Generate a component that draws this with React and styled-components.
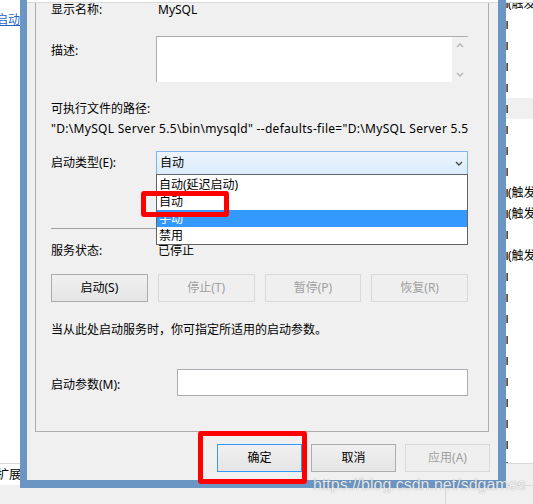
import React from "react";
import styled, { createGlobalStyle } from "styled-components";

const FRAME = "#6b96c3";

const GlobalStyle = createGlobalStyle`
  html, body { margin: 0; padding: 0; }
  body {
    background: #f0f0f0;
    font-family: "Noto Sans", "Noto Sans CJK SC", sans-serif;
    font-size: 12px;
    line-height: 14px;
    color: #000;
  }
  * { box-sizing: border-box; }
`;

const Screen = styled.div`
  position: relative;
  width: 533px;
  height: 504px;
  overflow: hidden;
  display: grid;
  grid-template-columns: 20px 486px 27px;
  grid-template-rows: 488px 16px;
  background: #f0f0f0;
`;

/* left strip: the services list behind the dialog */
const SidePane = styled.div`
  display: flex;
  flex-direction: column;
  overflow: hidden;
  white-space: nowrap;
  background: #f0f0f0;
`;

const LinkArea = styled.div`
  flex: 1;
  padding-top: 13px;
  background: #fff;
`;

const Link = styled.span`
  display: block;
  margin-left: -4px;
  color: #1a5fc9;
  text-decoration: underline;
`;

const Tab = styled.div`
  height: 22px;
  margin-bottom: 3px;
  padding-top: 4px;
  border-top: 1px solid #d9d9d9;
  background: #fff;
`;

const TabText = styled.span`
  display: block;
  margin-left: -3px;
`;

/* right strip */
const RightPane = styled.div`
  display: flex;
  flex-direction: column;
  overflow: hidden;
  background: linear-gradient(#fff 0 2px, #f0f0f0 2px);
`;

const ListArea = styled.div`
  display: flex;
  flex-direction: column;
  height: 462px;
  margin-top: 2px;
  overflow: hidden;
  border-top: 1px solid #d9d9d9;
  border-bottom: 1px solid #d9d9d9;
  background: #fff;
`;

const ListRow = styled.div`
  flex-shrink: 0;
  display: flex;
  align-items: center;
  height: 21px;
  white-space: nowrap;
  background: ${(p) => (p.$hover ? "#f0f0f0" : "transparent")};
  &:first-child { margin-top: -10px; }
`;

const Tick = styled.span`
  flex-shrink: 0;
  width: 2px;
  height: 8px;
  background: linear-gradient(90deg, #c98a3a, #2f3f5c);
`;

const StatusGap = styled.div`
  height: 22px;
  border-bottom: 1px solid #d9d9d9;
`;

/* dialog */
const Window = styled.div`
  display: flex;
  flex-direction: column;
  padding-top: 3px;
  border: 0 solid ${FRAME};
  border-width: 0 8px 8px 7px;
  background: linear-gradient(#fff 0 2px, #d9d9d9 2px 3px, #f0f0f0 3px);
`;

const Panel = styled.div`
  height: 429px;
  margin: 0 9px 0 8px;
  padding: 0 20px 0 15px;
  border: 1px solid #adadad;
  border-top: none;
`;

const FieldRow = styled.div`
  display: grid;
  grid-template-columns: ${(p) => p.$label || 105}px 1fr;
  align-items: ${(p) => p.$align || "center"};
  margin-top: ${(p) => p.$top || 0}px;
`;

const Label = styled.div`
  padding-top: ${(p) => p.$pad || 0}px;
  white-space: nowrap;
`;

const Value = styled.div`
  padding-left: 2px;
`;

const Line = styled.div`
  margin-top: ${(p) => p.$top || 0}px;
  white-space: nowrap;
`;

const PathLine = styled(Line)`
  letter-spacing: 0.3px;
`;

const TextArea = styled.div`
  display: flex;
  justify-content: flex-end;
  height: 46px;
  background: #fff;
  border-top: 1px solid #abadb3;
  border-left: 1px solid #abadb3;
`;

const ScrollGutter = styled.div`
  display: flex;
  flex-direction: column;
  justify-content: space-between;
  align-items: center;
  width: 16px;
  padding: 6px 0 5px;
  background: #f0f0f0;
`;

const Select = styled.div`
  position: relative;
  display: flex;
  align-items: center;
  justify-content: space-between;
  height: 24px;
  padding: 0 4px 0 3px;
  border: 1px solid #7eb4ea;
  background: linear-gradient(#ecf4fc, #dcecfc);
`;

const Dropdown = styled.ul`
  position: absolute;
  top: 100%;
  left: -1px;
  right: -1px;
  z-index: 2;
  margin: 0;
  padding: 1px 0 0;
  list-style: none;
  background: #fff;
  border: 1px solid #646464;
`;

const Option = styled.li`
  height: 17px;
  padding-left: 2px;
  line-height: 17px;
  color: ${(p) => (p.$active ? "#fff" : "#000")};
  background: ${(p) => (p.$active ? "#3399ff" : "transparent")};
`;

const Separator = styled.div`
  height: 1px;
  margin-top: 53px;
  background: #a0a0a0;
`;

const ButtonRow = styled.div`
  display: grid;
  grid-template-columns: repeat(4, 1fr);
  gap: 10px;
  margin-top: 16px;
`;

const DialogButton = styled.button`
  width: ${(p) => (p.$width ? `${p.$width}px` : "auto")};
  height: 28px;
  padding: 0;
  font: inherit;
  color: #000;
  border: 1px solid ${(p) => (p.$primary ? "#3399ff" : "#acacac")};
  border-radius: 0;
  background: linear-gradient(#f0f0f0, #e5e5e5);

  &:disabled {
    color: #a0a0a0;
    border-color: #d9d9d9;
    background: #efefef;
  }
`;

const ParamInput = styled.div`
  height: 27px;
  background: #fff;
  border: 1px solid #abadb3;
`;

const Footer = styled.div`
  display: flex;
  justify-content: flex-end;
  gap: 9px;
  padding: 12px 8px 0 0;
`;

const StatusBar = styled.div`
  grid-column: 1 / -1;
  display: grid;
  grid-template-columns: 445px 1fr;
`;

const StatusCell = styled.div`
  border-left: ${(p) => (p.$divider ? "1px solid #d5d5d5" : "none")};
`;

/* screenshot annotations */
const Annotation = styled.div`
  position: absolute;
  left: ${(p) => p.$x}px;
  top: ${(p) => p.$y}px;
  width: ${(p) => p.$w}px;
  height: ${(p) => p.$h}px;
  z-index: 4;
  border: 5px solid #ff0000;
  border-radius: 3px;
`;

const Watermark = styled.div`
  position: absolute;
  left: 313px;
  top: 476px;
  z-index: 5;
  font: 16px/18px "Liberation Sans", sans-serif;
  color: rgba(255, 255, 255, 0.85);
  text-shadow: 0 0 1px rgba(80, 80, 80, 0.6);
  white-space: nowrap;
`;

const Chevron = ({ up, color }) => (
  <svg width="8" height="5" viewBox="0 0 8 5">
    <path
      d={up ? "M1 4 L4 1 L7 4" : "M1 1 L4 4 L7 1"}
      fill="none"
      stroke={color}
      strokeWidth="1.4"
    />
  </svg>
);

const options = ["自动(延迟启动)", "自动", "手动", "禁用"];
const triggerRows = [0, 9, 10, 12];

const App = () => {
  const rows = Array.from({ length: 23 }, (_, i) => i);

  return (
    <>
      <GlobalStyle />
      <Screen>
        <SidePane>
          <LinkArea>
            <Link>启动</Link>
          </LinkArea>
          <Tab>
            <TabText>扩展</TabText>
          </Tab>
        </SidePane>

        <Window>
          <Panel>
            <FieldRow>
              <Label>显示名称:</Label>
              <Value>MySQL</Value>
            </FieldRow>

            <FieldRow $top={19} $align="start">
              <Label $pad={8}>描述:</Label>
              <TextArea>
                <ScrollGutter>
                  <Chevron up color="#b5b5b5" />
                  <Chevron color="#b5b5b5" />
                </ScrollGutter>
              </TextArea>
            </FieldRow>

            <Line $top={20}>可执行文件的路径:</Line>
            <PathLine $top={6}>
              "D:\MySQL Server 5.5\bin\mysqld" --defaults-file="D:\MySQL Server 5.5
            </PathLine>

            <FieldRow $top={15}>
              <Label>启动类型(E):</Label>
              <Select>
                <span>自动</span>
                <Chevron color="#4d4d4d" />
                <Dropdown>
                  {options.map((o) => (
                    <Option key={o} $active={o === "手动"}>
                      {o}
                    </Option>
                  ))}
                </Dropdown>
              </Select>
            </FieldRow>

            <Separator />

            <FieldRow $top={15}>
              <Label>服务状态:</Label>
              <Value>已停止</Value>
            </FieldRow>

            <ButtonRow>
              <DialogButton>启动(S)</DialogButton>
              <DialogButton disabled>停止(T)</DialogButton>
              <DialogButton disabled>暂停(P)</DialogButton>
              <DialogButton disabled>恢复(R)</DialogButton>
            </ButtonRow>

            <Line $top={21}>当从此处启动服务时，你可指定所适用的启动参数。</Line>

            <FieldRow $top={32} $label={126} $align="start">
              <Label $pad={9}>启动参数(M):</Label>
              <ParamInput />
            </FieldRow>
          </Panel>

          <Footer>
            <DialogButton $width={85} $primary>确定</DialogButton>
            <DialogButton $width={85}>取消</DialogButton>
            <DialogButton $width={85} disabled>应用(A)</DialogButton>
          </Footer>
        </Window>

        <RightPane>
          <ListArea>
            {rows.map((i) => (
              <ListRow key={i} $hover={i === 5}>
                <Tick />
                {triggerRows.includes(i) && <span>(触发器启动)</span>}
              </ListRow>
            ))}
          </ListArea>
          <StatusGap />
        </RightPane>

        <StatusBar>
          <StatusCell />
          <StatusCell $divider />
        </StatusBar>

        <Annotation $x={141} $y={191} $w={88} $h={26} />
        <Annotation $x={198} $y={431} $w={109} $h={53} />
        <Watermark>https://blog.csdn.net/sdgames</Watermark>
      </Screen>
    </>
  );
};

export default App;
